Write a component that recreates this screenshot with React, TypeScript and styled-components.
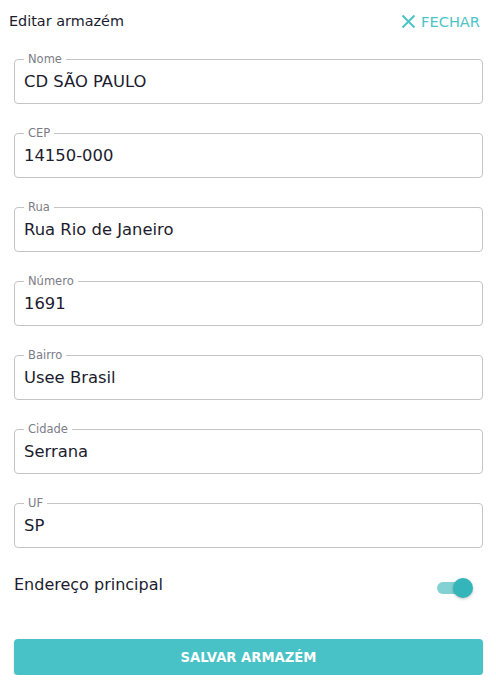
import React from 'react'
import styled, { createGlobalStyle } from 'styled-components'

const Global = createGlobalStyle`
	html, body {
		margin: 0;
		padding: 0;
		background: #fff;
	}
	body {
		font-family: 'DejaVu Sans', 'Liberation Sans', sans-serif;
		color: #1c1c2e;
	}
`

const Page = styled.div`
	width: 496px;
	box-sizing: border-box;
	padding: 0 13px 0 14px;
`

const Header = styled.div`
	display: flex;
	align-items: center;
	justify-content: space-between;
	height: 42px;
	margin-left: -5px;
	margin-right: 3px;
`

const Title = styled.div`
	font-size: 14.4px;
	color: #1c1c2e;
`

const Close = styled.button`
	display: flex;
	align-items: center;
	gap: 5px;
	border: none;
	background: none;
	padding: 0;
	font-family: inherit;
	font-size: 14.6px;
	color: #4cc4c6;
	cursor: pointer;
`

const Form = styled.form`
	display: flex;
	flex-direction: column;
	gap: 29px;
	margin-top: 17px;
`

const Box = styled.div`
	position: relative;
	height: 45px;
	box-sizing: border-box;
	border: 1px solid #c4c4c4;
	border-radius: 4px;
	padding: 0 9px;
	display: flex;
	align-items: center;
`

const Legend = styled.span`
	position: absolute;
	top: -7px;
	left: 9px;
	font-size: 11.5px;
	line-height: 12px;
	color: #7c7c86;
	padding: 0 4px;
	background: #fff;
`

const Value = styled.div`
	font-size: 16.4px;
	color: #1c1c2e;
`

const SwitchRow = styled.div`
	display: flex;
	align-items: center;
	justify-content: space-between;
	margin-top: 24px;
	height: 24px;
`

const SwitchLabel = styled.span`
	font-size: 16px;
	color: #1c1c2e;
`

const Track = styled.div<{ $on: boolean }>`
	position: relative;
	width: 28px;
	height: 12px;
	border-radius: 6px;
	background: ${p => (p.$on ? '#82d2d3' : '#bdbdbd')};
	margin-right: 18px;
	margin-top: 7px;
`

const Thumb = styled.div<{ $on: boolean }>`
	position: absolute;
	top: -4px;
	left: ${p => (p.$on ? '16px' : '-4px')};
	width: 20px;
	height: 20px;
	border-radius: 50%;
	background: ${p => (p.$on ? '#34b5b9' : '#fafafa')};
	box-shadow: 0 1px 3px rgba(0, 0, 0, 0.25);
`

const Submit = styled.button`
	margin-top: 43px;
	width: 100%;
	height: 36px;
	border: none;
	border-radius: 4px;
	background: #48c2c6;
	color: #fff;
	font-family: inherit;
	font-size: 13.2px;
	font-weight: 600;
	box-shadow: 0 1px 2px rgba(0, 0, 0, 0.15);
`

const fields = [
	{ label: 'Nome', value: 'CD SÃO PAULO' },
	{ label: 'CEP', value: '14150-000' },
	{ label: 'Rua', value: 'Rua Rio de Janeiro' },
	{ label: 'Número', value: '1691' },
	{ label: 'Bairro', value: 'Usee Brasil' },
	{ label: 'Cidade', value: 'Serrana' },
	{ label: 'UF', value: 'SP' },
]

const CloseIcon = () => (
	<svg width="15" height="15" viewBox="0 0 15 15">
		<path d="M1.5 1.5 L13.5 13.5 M13.5 1.5 L1.5 13.5" stroke="#4cc4c6" strokeWidth="2" fill="none" />
	</svg>
)

export default function App() {
	return (
		<Page>
			<Global />
			<Header>
				<Title>Editar armazém</Title>
				<Close type="button">
					<CloseIcon />
					FECHAR
				</Close>
			</Header>
			<Form onSubmit={e => e.preventDefault()}>
				{fields.map(f => (
					<Box key={f.label}>
						<Legend>{f.label}</Legend>
						<Value>{f.value}</Value>
					</Box>
				))}
			</Form>
			<SwitchRow>
				<SwitchLabel>Endereço principal</SwitchLabel>
				<Track $on>
					<Thumb $on />
				</Track>
			</SwitchRow>
			<Submit type="button">SALVAR ARMAZÉM</Submit>
		</Page>
	)
}
